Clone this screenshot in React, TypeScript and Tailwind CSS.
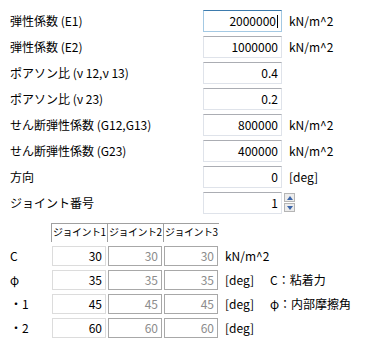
import { ReactNode } from "react";

const font = { fontFamily: '"Noto Sans CJK JP", "Noto Sans", sans-serif' };

interface FieldRowProps {
  label: string;
  value: string;
  unit?: string;
  focused?: boolean;
  spinner?: boolean;
}

function Spinner() {
  return (
    <div className="ml-[2px] flex h-[20px] w-[11px] flex-col gap-[1px]">
      <div className="flex h-[9px] items-center justify-center border border-[#b5b5b5] bg-[#ececec]">
        <svg width="6" height="4" viewBox="0 0 6 4">
          <path d="M0 4 L3 0 L6 4 Z" fill="#3a64a8" />
        </svg>
      </div>
      <div className="flex h-[9px] items-center justify-center border border-[#b5b5b5] bg-[#ececec]">
        <svg width="6" height="4" viewBox="0 0 6 4">
          <path d="M0 0 L3 4 L6 0 Z" fill="#3a64a8" />
        </svg>
      </div>
    </div>
  );
}

function FieldRow({ label, value, unit, focused, spinner }: FieldRowProps) {
  return (
    <div className="flex h-[22px] items-center">
      <div className="w-[193px] whitespace-nowrap text-[12px] text-black">{label}</div>
      <div
        className={
          focused
            ? "flex h-[22px] w-[79px] items-center justify-end border border-[#a4c9e3] border-t-[#3d7bad] pr-[3px] text-[12px]"
            : "flex h-[22px] w-[79px] items-center justify-end border border-[#dfe3ea] border-t-[#abadb3] pr-[3px] text-[12px]"
        }
      >
        {value}
        {focused && <span className="ml-[1px] inline-block h-[13px] w-[1px] bg-black" />}
      </div>
      {spinner && <Spinner />}
      {unit && <div className="ml-[7px] text-[12px]">{unit}</div>}
    </div>
  );
}

function Cell({ value, enabled }: { value: string; enabled?: boolean }) {
  return (
    <div className="w-[56px] pl-[1px]">
      <div
        className={
          enabled
            ? "flex h-[20px] w-[54px] items-center justify-end border border-[#dcdcdc] pr-[3px] text-[12px] text-black"
            : "flex h-[20px] w-[54px] items-center justify-end border border-[#a8a8a8] pr-[3px] text-[12px] text-[#8c8c8c]"
        }
      >
        {value}
      </div>
    </div>
  );
}

function GridRow({ label, values, unit, note }: { label: string; values: string[]; unit: string; note?: ReactNode }) {
  return (
    <div className="flex h-[20px] items-center">
      <div className="w-[41px] text-[12px]">{label}</div>
      {values.map((v, i) => (
        <Cell key={i} value={v} enabled={i === 0} />
      ))}
      <div className="ml-[6px] w-[45px] whitespace-nowrap text-[12px]">{unit}</div>
      {note && <div className="whitespace-nowrap text-[12px]">{note}</div>}
    </div>
  );
}

export default function App() {
  const fields: FieldRowProps[] = [
    { label: "弾性係数 (E1)", value: "2000000", unit: "kN/m^2", focused: true },
    { label: "弾性係数 (E2)", value: "1000000", unit: "kN/m^2" },
    { label: "ポアソン比 (ν 12,ν 13)", value: "0.4" },
    { label: "ポアソン比 (ν 23)", value: "0.2" },
    { label: "せん断弾性係数 (G12,G13)", value: "800000", unit: "kN/m^2" },
    { label: "せん断弾性係数 (G23)", value: "400000", unit: "kN/m^2" },
    { label: "方向", value: "0", unit: "[deg]" },
    { label: "ジョイント番号", value: "1", spinner: true },
  ];

  return (
    <div className="h-[364px] w-[377px] bg-white text-black" style={font}>
      <div className="flex flex-col gap-[4px] pl-[10px] pt-[10px]">
        {fields.map((f) => (
          <FieldRow key={f.label} {...f} />
        ))}
      </div>

      <div className="mt-[9px] pl-[10px]">
        {/* header */}
        <div className="flex h-[19px]">
          <div className="w-[41px]" />
          {["ジョイント1", "ジョイント2", "ジョイント3"].map((h) => (
            <div
              key={h}
              className="w-[56px] overflow-hidden whitespace-nowrap border-l border-t border-[#a0a0a0] pl-[1px] text-[10px] leading-[16px] tracking-[-0.5px]"
            >
              {h}
            </div>
          ))}
        </div>
        <div className="mt-[4px] flex flex-col gap-[4px]">
          <GridRow label="C" values={["30", "30", "30"]} unit="kN/m^2" />
          <GridRow label="φ" values={["35", "35", "35"]} unit="[deg]" note="C：粘着力" />
          <GridRow label="・1" values={["45", "45", "45"]} unit="[deg]" note="φ：内部摩擦角" />
          <GridRow label="・2" values={["60", "60", "60"]} unit="[deg]" />
        </div>
      </div>
    </div>
  );
}
